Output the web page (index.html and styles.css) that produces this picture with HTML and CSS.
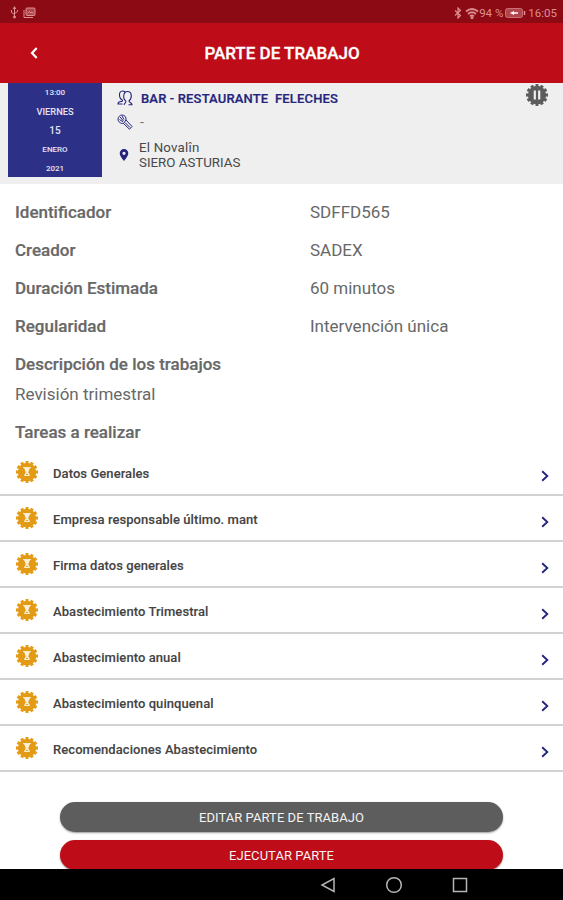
FILE: index.html
```
<!DOCTYPE html>
<html lang="es">
    <head>
        <meta charset="utf-8" />
        <title>Parte de trabajo</title>
        <link rel="stylesheet" href="styles.css">
    </head>

    <body>
        <svg class="symbols" width="0" height="0">
            <symbol id="gear" viewBox="0 0 24 24">
                <circle cx="12" cy="12" r="9.2" fill="currentColor" />
                <circle cx="12" cy="12" r="9.6" fill="none" stroke="currentColor" stroke-width="2.8" pathLength="24" stroke-dasharray="1.2 0.8" stroke-dashoffset="0.6" />
            </symbol>
            <symbol id="task" viewBox="0 0 24 24">
                <use href="#gear" />
                <path d="M8 7.500h8M9.500 8h5l-1.700 4.200L14.500 15.500h-5l1.700-3.300z" fill="#fbf0d8" stroke="#fbf0d8" stroke-width="0.900" />
                <path d="M10.700 15l1.300-1.600 1.300 1.600z" fill="#e39a14" />
            </symbol>
            <symbol id="chevron" viewBox="0 0 8 12">
                <path d="M1.200 1.200L6.300 6L1.200 10.800" fill="none" stroke="currentColor" stroke-width="1.900" />
            </symbol>
        </svg>

        <div class="status-bar">
            <div class="status-left">
                <svg width="9" height="13" viewBox="0 0 9 13" fill="none" stroke="currentColor">
                    <path d="M4.500 2v9M1.500 4v2.500l3 2M7.500 4v1.500l-3 2" />
                    <path d="M4.500 0l1.800 3H2.700z" fill="currentColor" stroke="none" />
                    <circle cx="4.500" cy="11" r="1" fill="currentColor" />
                </svg>
                <svg width="13" height="12" viewBox="0 0 13 12" fill="none" stroke="currentColor">
                    <rect x="3" y="1" width="9" height="7.500" rx="1" fill="currentColor" fill-opacity="0.45" />
                    <path d="M1 3v7.500h9M4.500 6.500l2-2 1.500 1.500 1-1 1.500 1.500" />
                </svg>
            </div>
            <div class="status-right">
                <svg width="8" height="12" viewBox="0 0 8 12" fill="none" stroke="currentColor" stroke-width="1.200">
                    <path d="M1 3.500l5.500 5L4 11V1l2.500 2.500L1 8.500" />
                </svg>
                <svg class="wifi" width="14" height="12" viewBox="0 0 14 12" fill="none" stroke="currentColor" stroke-width="1.800">
                    <path d="M1 4.500Q7-.5 13 4.500M3 7Q7 3.500 11 7M5 9.300Q7 7.500 9 9.300" />
                    <circle cx="7" cy="10.700" r="0.600" fill="currentColor" />
                </svg>
                <span class="percent">94 %</span>
                <svg class="battery" width="21" height="10" viewBox="0 0 21 10">
                    <rect x="0.500" y="0.500" width="17" height="9" rx="2" fill="currentColor" fill-opacity="0.45" stroke="currentColor" stroke-opacity="0.700" />
                    <path d="M5 5l4-2v1.300h4v1.400H9V7z" fill="#fff" />
                    <path d="M19.500 3v4" stroke="currentColor" stroke-width="1.500" />
                </svg>
                <span class="clock">16:05</span>
            </div>
        </div>

        <header>
            <svg class="back" width="8" height="12" viewBox="0 0 8 12">
                <path d="M6.700 1L2 6l4.700 5" fill="none" stroke="#fff" stroke-width="2.200" />
            </svg>
            <h1>PARTE DE TRABAJO</h1>
        </header>

        <div class="summary">
            <div class="date">
                <span>13:00</span>
                <span class="weekday">VIERNES</span>
                <span class="day">15</span>
                <span>ENERO</span>
                <span>2021</span>
            </div>
            <div class="client">
                <div class="client-row name">
                    <svg width="16" height="16" viewBox="0 0 16 16" fill="none" stroke="currentColor" stroke-width="1.100">
                        <path d="M5.500 10C2 9 1 1 5.500 1c1.500 0 2 .5 2.500 1M5.500 10c0 2-1 1.500-1.500 1.500S1 11.500 1 14h4.500" />
                        <path d="M9 11C5.500 9 6 1.500 10.500 1.500S15.500 8 12 11c0 1.500 3 1.500 3 3.800h-3.500M9 11c0 2-1.500 2-2 3.800" />
                    </svg>
                    <span>BAR - RESTAURANTE&nbsp; FELECHES</span>
                </div>
                <div class="client-row phone">
                    <svg width="16" height="16" viewBox="0 0 16 16" fill="none" stroke="currentColor" stroke-width="1">
                        <path d="M1 5c0-2 2-4 4-4 2.500 0 4.500 2 4 5l6 6.500-2.500 2.700-6-5.700C4 10 1 8 1 5zM3 3l3.500 4M5 2l2 3.500M2.500 5.500L6 8M6.500 9.500L9 6M8 8.500l5 5" />
                    </svg>
                    <span>-</span>
                </div>
                <div class="client-row address">
                    <svg width="10" height="12" viewBox="0 0 10 12">
                        <path d="M5 0a4.300 4.300 0 0 0-4.300 4.300C.7 7.300 5 12 5 12s4.300-4.700 4.300-7.700A4.300 4.300 0 0 0 5 0zm0 2.700a1.600 1.600 0 1 1 0 3.200 1.600 1.600 0 0 1 0-3.200z" fill="currentColor" fill-rule="evenodd" />
                    </svg>
                    <div>
                        <p class="street">El Novalîn</p>
                        <p class="town">SIERO ASTURIAS</p>
                    </div>
                </div>
            </div>
            <svg class="pause" width="24" height="24" viewBox="0 0 24 24">
                <use href="#gear" />
                <path d="M9.800 7.500v9M14.200 7.500v9" stroke="#efefef" stroke-width="2.200" />
            </svg>
        </div>

        <div class="details">
            <div class="field"><b>Identificador</b><span>SDFFD565</span></div>
            <div class="field"><b>Creador</b><span>SADEX</span></div>
            <div class="field"><b>Duración Estimada</b><span>60 minutos</span></div>
            <div class="field"><b>Regularidad</b><span>Intervención única</span></div>
            <div class="field"><b>Descripción de los trabajos</b></div>
            <p class="description">Revisión trimestral</p>
            <div class="field tasks-title"><b>Tareas a realizar</b></div>
        </div>

        <ul class="tasks">
            <li><svg class="badge"><use href="#task" /></svg><span>Datos Generales</span><svg class="arrow"><use href="#chevron" /></svg></li>
            <li><svg class="badge"><use href="#task" /></svg><span>Empresa responsable último. mant</span><svg class="arrow"><use href="#chevron" /></svg></li>
            <li><svg class="badge"><use href="#task" /></svg><span>Firma datos generales</span><svg class="arrow"><use href="#chevron" /></svg></li>
            <li><svg class="badge"><use href="#task" /></svg><span>Abastecimiento Trimestral</span><svg class="arrow"><use href="#chevron" /></svg></li>
            <li><svg class="badge"><use href="#task" /></svg><span>Abastecimiento anual</span><svg class="arrow"><use href="#chevron" /></svg></li>
            <li><svg class="badge"><use href="#task" /></svg><span>Abastecimiento quinquenal</span><svg class="arrow"><use href="#chevron" /></svg></li>
            <li><svg class="badge"><use href="#task" /></svg><span>Recomendaciones Abastecimiento</span><svg class="arrow"><use href="#chevron" /></svg></li>
        </ul>

        <div class="actions">
            <button class="edit">EDITAR PARTE DE TRABAJO</button>
            <button class="run">EJECUTAR PARTE</button>
        </div>

        <nav>
            <svg width="16" height="18" viewBox="0 0 16 18"><path d="M14 2.500v13L2 9z" /></svg>
            <svg width="18" height="18" viewBox="0 0 18 18"><circle cx="9" cy="9" r="7.300" /></svg>
            <svg width="16" height="16" viewBox="0 0 16 16"><rect x="1.500" y="1.500" width="13" height="13" /></svg>
        </nav>
    </body>
</html>
```

FILE: styles.css
```
* {
    box-sizing: border-box;
}

body {
    font-family: Roboto, "Liberation Sans", sans-serif;
    margin: 0;
    height: 900px;
    display: flex;
    flex-direction: column;
    background-color: #fff;
    overflow: hidden;
}

svg {
    display: block;
    flex-shrink: 0;
}

p {
    margin: 0;
}

.symbols {
    position: absolute;
}

.status-bar {
    height: 23px;
    flex-shrink: 0;
    display: flex;
    justify-content: space-between;
    align-items: center;
    padding: 2px 6px 0 10px;
    background-color: #8b0a13;
    color: #dd8f93;
    font-size: 11.5px;
}

.status-left,
.status-right {
    display: flex;
    align-items: center;
}

.status-left {
    gap: 4px;
}

.wifi {
    margin-left: 3px;
}

.battery {
    margin: 0 2px;
}

header {
    height: 60px;
    flex-shrink: 0;
    display: grid;
    grid-template-columns: 30px 1fr 30px;
    align-items: center;
    padding: 0 29px 0 30px;
    background-color: #be0d18;
    color: #fff;
}

h1 {
    margin: 0;
    font-size: 17px;
    font-weight: 500;
    text-align: center;
    -webkit-text-stroke: 0.3px #fff;
}

.summary {
    height: 101px;
    flex-shrink: 0;
    display: flex;
    align-items: flex-start;
    padding: 0 14px 0 8px;
    background-color: #efefef;
}

.date {
    width: 94px;
    height: 94px;
    display: flex;
    flex-direction: column;
    align-items: center;
    background-color: #2d3087;
    color: #e4e4f4;
    font-size: 8px;
    font-weight: 500;
    line-height: 19px;
}

.weekday {
    font-size: 9.3px;
}

.day {
    font-size: 10px;
}

.client {
    flex: 1;
    padding: 7px 0 0 15px;
    color: #24247c;
}

.client-row {
    display: flex;
    align-items: center;
}

.name {
    height: 16px;
    gap: 8px;
    font-size: 13px;
    font-weight: 500;
    letter-spacing: 0.15px;
    -webkit-text-stroke: 0.2px #24247c;
}

.phone {
    height: 16px;
    margin-top: 8px;
    gap: 7px;
}

.phone span {
    color: #777;
    font-size: 14px;
}

.address {
    margin-top: 10px;
    padding-left: 2px;
    gap: 10px;
    color: #24247c;
    font-size: 13.3px;
    line-height: 15px;
}

.address p {
    color: #484848;
}

.street {
    letter-spacing: 0.2px;
}

.pause {
    color: #5c5c5c;
}

.details {
    height: 266px;
    flex-shrink: 0;
    padding: 8.5px 15px 0;
    color: #686868;
    font-size: 17px;
}

.field {
    height: 38px;
    display: grid;
    grid-template-columns: 295px 1fr;
    align-items: center;
}

.field b {
    font-weight: 500;
    white-space: nowrap;
    -webkit-text-stroke: 0.2px #686868;
}

.description {
    height: 22px;
    line-height: 22px;
}

.tasks-title {
    margin-top: 8px;
}

.tasks {
    list-style: none;
    margin: 0;
    padding: 0;
    flex-shrink: 0;
}

.tasks li {
    height: 46px;
    display: flex;
    align-items: center;
    padding: 0 14px 0 15px;
    border-bottom: 2px solid #d2d2d2;
    color: #444;
    font-size: 13px;
    font-weight: 500;
}

.tasks span {
    flex: 1;
    margin-left: 14px;
    padding-top: 2px;
    letter-spacing: 0.07px;
    -webkit-text-stroke: 0.1px #444;
}

.badge {
    width: 24px;
    height: 24px;
    color: #e39a14;
}

.arrow {
    width: 8px;
    height: 12px;
    margin-top: 7px;
    color: #24247c;
}

.actions {
    flex: 1;
    min-height: 0;
    display: flex;
    flex-direction: column;
    align-items: center;
    gap: 8px;
    padding-top: 30px;
}

button {
    width: 443px;
    height: 30px;
    flex-shrink: 0;
    padding: 0;
    border: none;
    border-radius: 15px;
    color: #f4f4f4;
    font-family: inherit;
    font-size: 13px;
    letter-spacing: 0.05px;
    box-shadow: 0 1px 2px rgba(0, 0, 0, 0.4);
}

.edit {
    background-color: #5d5d5d;
}

.run {
    background-color: #be0d18;
}

nav {
    height: 31px;
    flex-shrink: 0;
    z-index: 1;
    display: flex;
    align-items: center;
    gap: 49px;
    padding-left: 320px;
    background-color: #000;
    fill: none;
    stroke: #b5b5b5;
    stroke-width: 1.5px;
}
```
